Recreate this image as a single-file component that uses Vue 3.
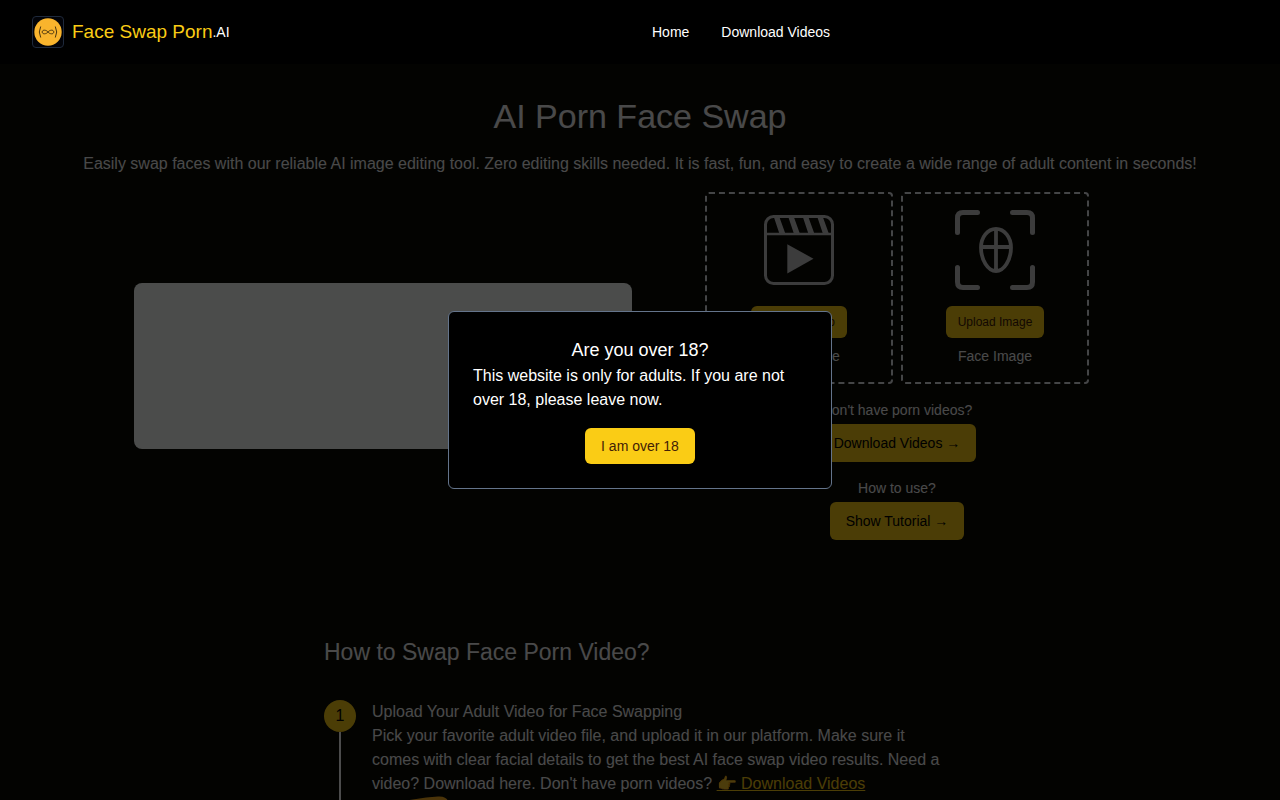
<script setup>
import { ref } from 'vue'

const showGate = ref(true)

const links = [
  { label: 'Home', href: '#' },
  { label: 'Download Videos', href: '#download' },
]
</script>

<template>
  <header class="navbar">
    <a href="#" class="brand">
      <svg class="logo" viewBox="0 0 32 32" aria-hidden="true">
        <rect x="0.5" y="0.5" width="31" height="31" rx="3.5" fill="#020308" stroke="#1e293b" />
        <circle cx="16" cy="16" r="13.7" fill="#f9b42d" />
        <g fill="none" stroke="#4a3510" stroke-width="1">
          <path d="M8.700 10.500q-2.800 5.500 0 11M23.300 10.500q2.800 5.500 0 11" />
          <path d="M16 16c-1.500-2.200-5.800-2.600-5.800 0s4.300 2.200 5.800 0 5.800-2.600 5.800 0-4.300 2.200-5.800 0z" />
        </g>
      </svg>
      <span class="name">Face Swap Porn</span><span class="tld">.AI</span>
    </a>
    <nav>
      <a v-for="link in links" :key="link.label" :href="link.href">{{ link.label }}</a>
    </nav>
  </header>

  <main>
    <section class="hero">
      <h1>AI Porn Face Swap</h1>
      <p class="lead">Easily swap faces with our reliable AI image editing tool. Zero editing skills needed. It is fast, fun, and easy to create a wide range of adult content in seconds!</p>

      <div class="columns">
        <div class="preview"></div>
        <div class="tool">
          <div class="uploads">
            <div class="upload">
              <svg viewBox="0 0 80 80" aria-hidden="true">
                <g fill="none" stroke="currentColor">
                  <rect x="6.500" y="6.500" width="67" height="67" rx="8" stroke-width="3" />
                  <path d="M6 24H74" stroke-width="2.500" />
                </g>
                <g fill="currentColor">
                  <path d="M14.500 6h5.500L26.500 24h-6zM29 6h5.500l6.500 18h-6zM43.500 6h5.500L55.500 24h-6zM58 6h5.500l6.500 18h-6z" />
                  <path d="M28.300 34.300L54.500 48.700 28.300 63.500z" />
                </g>
              </svg>
              <button type="button" class="btn small">Upload Video</button>
              <span>Target Image</span>
            </div>
            <div class="upload">
              <svg viewBox="0 0 80 80" aria-hidden="true">
                <g fill="none" stroke="currentColor" stroke-linecap="round">
                  <path d="M2.500 22.500V8Q2.500 2.500 8 2.500H22.500M57.500 2.500H72Q77.500 2.500 77.500 8V22.500M77.500 57.500V72Q77.500 77.500 72 77.500H57.500M22.500 77.500H8Q2.500 77.500 2.500 72V57.500" stroke-width="5" />
                  <path d="M41 18.800c8.500 0 15 8.500 15 18.700 0 12.500-7 23.500-15 23.500s-15-11-15-23.500c0-10.200 6.500-18.700 15-18.700zM41 19V61M26 37H56" stroke-width="3.800" />
                </g>
              </svg>
              <button type="button" class="btn small">Upload Image</button>
              <span>Face Image</span>
            </div>
          </div>

          <div class="prompt">
            <span>Don't have porn videos?</span>
            <button type="button" class="btn">Download Videos →</button>
          </div>
          <div class="prompt">
            <span>How to use?</span>
            <button type="button" class="btn">Show Tutorial →</button>
          </div>
        </div>
      </div>
    </section>

    <section class="guide">
      <h2>How to Swap Face Porn Video?</h2>
      <div class="step">
        <div class="marker">
          <span>1</span>
        </div>
        <div class="body">
          <h3>Upload Your Adult Video for Face Swapping</h3>
          <p>
            Pick your favorite adult video file, and upload it in our platform. Make sure it comes with clear facial details to get the best AI face swap video results. Need a video? Download here. Don't have porn videos?
            <a href="#download">👉 Download Videos</a>
          </p>
          <svg class="art" viewBox="0 0 120 80" aria-hidden="true">
            <path d="M20 8Q42 2 66 0.500q8-0.500 10 4.500l10 75H28z" fill="#fbb020" />
          </svg>
        </div>
      </div>
    </section>
  </main>

  <div v-if="showGate" class="overlay">
    <div class="modal" role="dialog" aria-labelledby="gate-title">
      <h2 id="gate-title">Are you over 18?</h2>
      <p>This website is only for adults. If you are not over 18, please leave now.</p>
      <button type="button" class="btn confirm" @click="showGate = false">I am over 18</button>
    </div>
  </div>
</template>

<style>
body {
  background: #0a0a05;
  color: #f5f5f5;
  font-family: "Liberation Sans", Arial, sans-serif;
  font-size: 16px;
  line-height: 24px;
}
</style>

<style scoped>
h1, h2, h3, p {
  margin: 0;
  font-weight: 400;
}

.navbar {
  position: relative;
  z-index: 20;
  display: grid;
  grid-template-columns: 1fr 1fr;
  align-items: center;
  height: 64px;
  padding: 0 32px;
  background: #000;
}

.brand {
  display: flex;
  align-items: center;
  color: #fff;
  text-decoration: none;
}

.logo {
  width: 32px;
  height: 32px;
  margin-right: 8px;
}

.name {
  color: #facc15;
  font-size: 19px;
}

.tld {
  font-size: 14px;
}

nav {
  display: flex;
  gap: 32px;
  padding-left: 12px;
}

nav a {
  color: #fff;
  font-size: 14px;
  text-decoration: none;
}

.hero {
  padding: 32px 16px 0;
  text-align: center;
}

h1 {
  font-size: 34px;
  line-height: 40px;
  padding-bottom: 16px;
}

.columns {
  display: grid;
  grid-template-columns: 1fr 1fr;
  align-items: center;
  max-width: 1028px;
  margin: 16px auto 0;
}

.preview {
  height: 166px;
  margin: 0 8px;
  border-radius: 8px;
  background: #fafffa;
}

.tool {
  display: flex;
  flex-direction: column;
  align-items: center;
  gap: 16px;
  font-size: 14px;
  line-height: 20px;
}

.uploads {
  display: flex;
  gap: 8px;
}

.upload {
  box-sizing: border-box;
  display: flex;
  flex-direction: column;
  align-items: center;
  width: 188px;
  padding: 16px;
  border: 2px dashed #e5e7eb;
  border-radius: 4px;
}

.upload svg {
  width: 80px;
  height: 80px;
  margin-bottom: 16px;
  color: #c8c8c8;
}

.upload span {
  margin-top: 8px;
}

.prompt {
  display: flex;
  flex-direction: column;
  align-items: center;
  gap: 4px;
}

.btn {
  height: 38px;
  padding: 0 16px;
  border: 0;
  border-radius: 6px;
  background: #facc15;
  color: #000;
  font-family: inherit;
  font-size: 14px;
  cursor: pointer;
}

.btn.small {
  height: 32px;
  padding: 0 12px;
  color: #422006;
  font-size: 12px;
}

.guide {
  max-width: 632px;
  margin: 96px auto 0;
}

.guide h2 {
  font-size: 23px;
  line-height: 32px;
  margin-bottom: 32px;
}

.step {
  display: flex;
  gap: 16px;
}

.marker {
  display: flex;
  flex-direction: column;
  align-items: center;
  flex: 0 0 32px;
}

.marker span {
  width: 32px;
  line-height: 32px;
  border-radius: 50%;
  background: #facc15;
  color: #000;
  text-align: center;
}

.marker::after {
  content: "";
  flex: 1;
  width: 2px;
  background: #fff;
}

.body h3 {
  font-size: 16px;
}

.body a {
  color: #facc15;
}

.art {
  display: block;
  width: 120px;
}

.overlay {
  position: fixed;
  inset: 0;
  z-index: 10;
  display: flex;
  align-items: center;
  justify-content: center;
  background: rgba(0, 0, 0, 0.7);
}

.modal {
  box-sizing: border-box;
  display: flex;
  flex-direction: column;
  width: 384px;
  padding: 24px;
  border: 1px solid #64748b;
  border-radius: 6px;
  background: #000;
  color: #fff;
}

.modal h2 {
  font-size: 18px;
  line-height: 28px;
  text-align: center;
}

.confirm {
  align-self: center;
  height: 36px;
  margin-top: 16px;
  color: #422006;
}
</style>
